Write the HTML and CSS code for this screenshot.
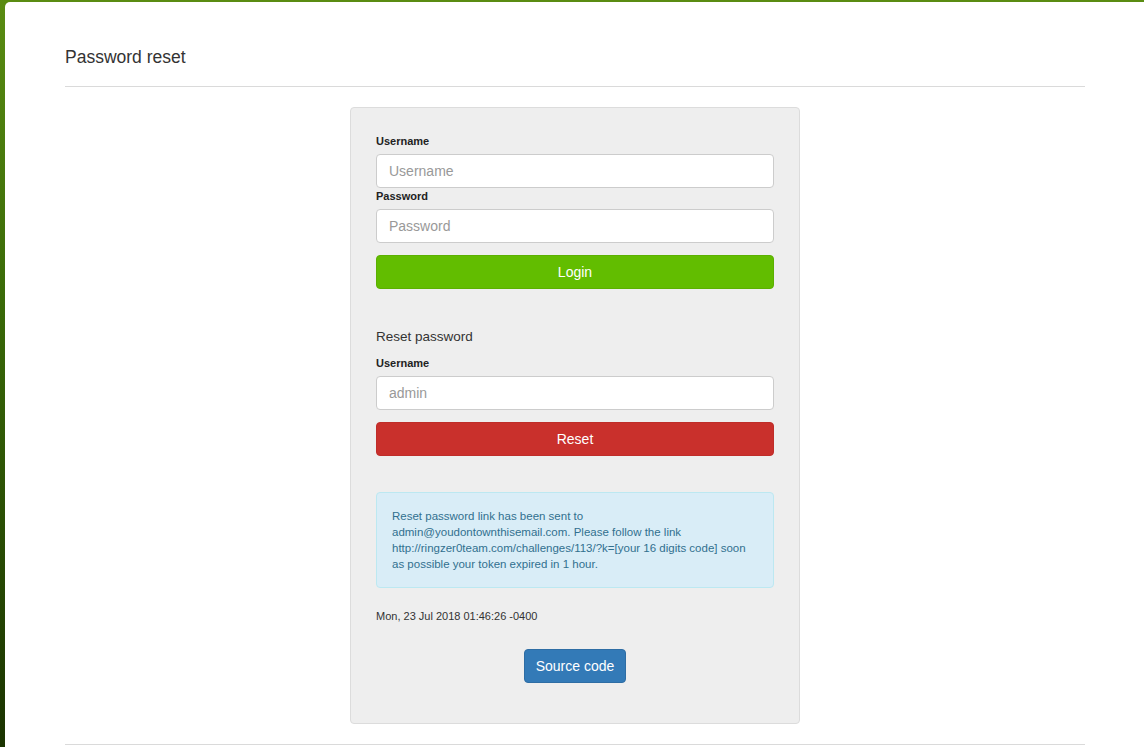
FILE: index.html
```html
<!DOCTYPE html>
<html>
<head>
<meta charset="utf-8">
<title>Password reset</title>
<link rel="stylesheet" href="styles.css">
</head>
<body>
<div class="sheet">
  <div class="container">
    <h1 class="page-title">Password reset</h1>
    <div class="well">
      <form class="form">
        <label class="label">Username</label>
        <input class="input" type="text" placeholder="Username">
        <label class="label">Password</label>
        <input class="input" type="password" placeholder="Password">
        <button class="btn btn-login" type="button">Login</button>
      </form>
      <h2 class="section-title">Reset password</h2>
      <form class="form">
        <label class="label">Username</label>
        <input class="input" type="text" placeholder="admin">
        <button class="btn btn-reset" type="button">Reset</button>
      </form>
      <div class="alert">Reset password link has been sent to admin@youdontownthisemail.com. Please follow the link http://ringzer0team.com/challenges/113/?k=[your 16 digits code] soon as possible your token expired in 1 hour.</div>
      <div class="date">Mon, 23 Jul 2018 01:46:26 -0400</div>
      <div class="center">
        <button class="btn btn-source" type="button">Source code</button>
      </div>
    </div>
    <div class="rule"></div>
  </div>
</div>
</body>
</html>
```

FILE: styles.css
```css
html, body {
  margin: 0;
  padding: 0;
  height: 100%;
}
body {
  background: linear-gradient(to bottom, #5a8c12 0%, #3a6a08 40%, #1a3300 100%);
  font-family: "Liberation Sans", Arial, sans-serif;
  overflow: hidden;
}
.sheet {
  margin: 2px 0 0 5px;
  background: #fff;
  border-top-left-radius: 5px;
  min-height: 760px;
}
.container {
  width: 1020px;
  padding: 0 60px;
}
.page-title {
  margin: 0;
  padding-top: 45px;
  padding-bottom: 19px;
  font-size: 17.5px;
  line-height: 20px;
  font-weight: normal;
  color: #333;
  border-bottom: 1px solid #dadada;
}
.well {
  box-sizing: border-box;
  width: 450px;
  margin: 20px auto 20px;
  padding: 25px 25px 40px;
  background: #eee;
  border: 1px solid #dcdcdc;
  border-radius: 4px;
}
.form {
  display: flex;
  flex-direction: column;
}
.label {
  font-size: 11px;
  line-height: 16px;
  font-weight: bold;
  color: #222;
  margin-bottom: 5px;
}
.input {
  box-sizing: border-box;
  height: 34px;
  padding: 6px 12px;
  font-family: inherit;
  font-size: 14px;
  color: #555;
  background: #fff;
  border: 1px solid #ccc;
  border-radius: 4px;
  margin: 0;
}
.input::placeholder {
  color: #999;
}
.btn {
  box-sizing: border-box;
  height: 34px;
  margin-top: 12px;
  font-family: inherit;
  font-size: 14px;
  color: #fff;
  border-radius: 4px;
  border: 1px solid transparent;
  cursor: pointer;
}
.btn-login {
  background: #62bd00;
  border-color: #5bb000;
}
.btn-reset {
  background: #c9302c;
  border-color: #bf2d29;
}
.section-title {
  margin: 38px 0 8px;
  font-size: 13.5px;
  line-height: 20px;
  font-weight: normal;
  color: #333;
}
.alert {
  margin-top: 36px;
  padding: 15px;
  font-size: 11.5px;
  line-height: 16px;
  color: #31708f;
  background: #d9edf7;
  border: 1px solid #bce8f1;
  border-radius: 4px;
}
.date {
  margin-top: 20px;
  font-size: 11px;
  line-height: 16px;
  color: #333;
}
.center {
  display: flex;
  justify-content: center;
  margin-top: 25px;
}
.btn-source {
  margin-top: 0;
  width: 102px;
  background: #337ab7;
  border-color: #2e6da4;
}
.rule {
  border-top: 1px solid #dadada;
}
```
